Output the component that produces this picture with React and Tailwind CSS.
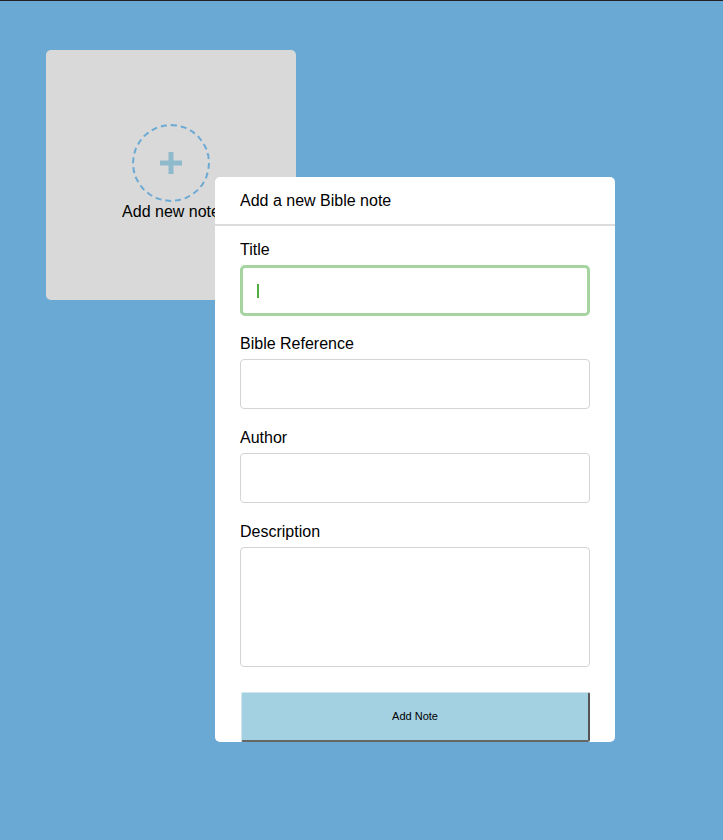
import React from "react";

const font = { fontFamily: '"Liberation Sans", Arial, sans-serif' };

function Field({ label, focused, tall }) {
  return (
    <div className={focused ? "mb-[19px]" : "mb-5"}>
      <label className="block text-[16px] leading-[18px] text-black mb-[6px]">{label}</label>
      {tall ? (
        <div className="h-[120px] w-full rounded-[4px] border border-[#d4d4d4] bg-white" />
      ) : focused ? (
        <div className="relative h-[51px] w-full rounded-[5px] border-[3px] border-[#a6d4a1] bg-white">
          <span className="absolute left-[14px] top-[16px] h-[14px] w-[2px] bg-[#4fae3f]" />
        </div>
      ) : (
        <div className="h-[50px] w-full rounded-[4px] border border-[#d4d4d4] bg-white" />
      )}
    </div>
  );
}

export default function App() {
  return (
    <div className="relative min-h-[840px] w-full bg-[#6aa9d4] border-t border-[#222]" style={font}>
      <div className="pl-[46px] pt-[49px]">
        <div className="flex h-[250px] w-[250px] flex-col items-center justify-center rounded-[5px] bg-[#d9d9d9] pb-[2px]">
          <div className="flex h-[78px] w-[78px] items-center justify-center rounded-full border-2 border-dashed border-[#6aa9d4] mt-[-4px]">
            <svg width="22" height="22" viewBox="0 0 22 22">
              <rect x="8.5" y="0" width="5" height="22" fill="#8fbacb" />
              <rect x="0" y="8.5" width="22" height="5" fill="#8fbacb" />
            </svg>
          </div>
          <span className="text-[16px] leading-[18px] text-black mt-[1px]">Add new note</span>
        </div>
      </div>

      <div className="absolute left-[215px] top-[176px] w-[400px] overflow-hidden rounded-[5px] bg-white">
        <div className="border-b-2 border-[#dcdcdc] px-[25px] pt-[15px] pb-[14px]">
          <h2 className="text-[16px] leading-[18px] text-black">Add a new Bible note</h2>
        </div>
        <div className="px-[25px] pt-[15px]">
          <Field label="Title" focused />
          <Field label="Bible Reference" />
          <Field label="Author" />
          <Field label="Description" tall />
          <button className="mt-[25px] ml-[1px] flex h-[50px] w-[349px] items-center justify-center rounded-[2px] border-t border-l border-r-2 border-b-2 border-t-[#d0e6ee] border-l-[#d0e6ee] border-r-[#555] border-b-[#666] bg-[#a4d1e1] text-[11px] text-black">
            Add Note
          </button>
        </div>
      </div>
    </div>
  );
}
